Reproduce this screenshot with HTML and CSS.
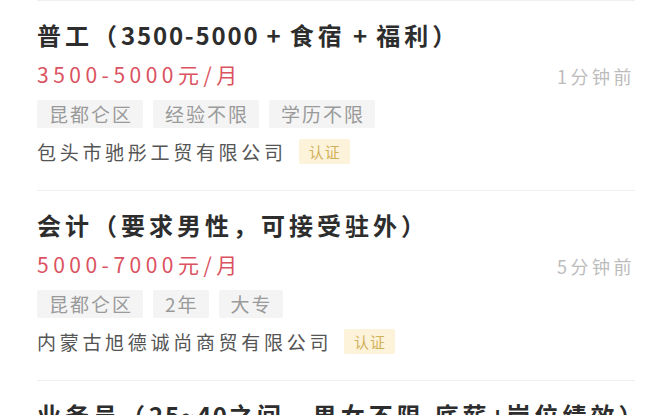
FILE: index.html
```html
<!DOCTYPE html>
<html>
<head>
    <title>招聘列表</title>
    <link rel="stylesheet" href="styles.css">
</head>
<body>
    <div class="job-list">
        <div class="job">
            <div class="title">普工（<span class="num">3500-5000 + </span>食宿<span class="num"> + </span>福利）</div>
            <div class="salary-row">
                <span class="salary">3500-5000元/月</span>
                <span class="time">1分钟前</span>
            </div>
            <div class="tags">
                <span class="tag">昆都仑区</span>
                <span class="tag">经验不限</span>
                <span class="tag">学历不限</span>
            </div>
            <div class="company">
                <span class="company-name">包头市驰彤工贸有限公司</span>
                <span class="badge">认证</span>
            </div>
        </div>

        <div class="job">
            <div class="title">会计（要求男性，可接受驻外）</div>
            <div class="salary-row">
                <span class="salary">5000-7000元/月</span>
                <span class="time">5分钟前</span>
            </div>
            <div class="tags">
                <span class="tag">昆都仑区</span>
                <span class="tag">2年</span>
                <span class="tag">大专</span>
            </div>
            <div class="company">
                <span class="company-name">内蒙古旭德诚尚商贸有限公司</span>
                <span class="badge">认证</span>
            </div>
        </div>

        <div class="job">
            <div class="title">业务员（<span class="num">25~40</span>之间，男女不限<span class="num">,</span>底薪<span class="num">+</span>岗位绩效）</div>
            <div class="salary-row">
                <span class="salary">4000-8000元/月</span>
                <span class="time">8分钟前</span>
            </div>
        </div>
    </div>
</body>
</html>
```

FILE: styles.css
```css
body {
    font-family: "Noto Sans CJK SC", "Noto Sans", sans-serif;
    background-color: #fff;
    margin: 0;
    overflow: hidden;
}

.job-list {
    margin: 0 35px 0 37px;
}

.job {
    border-top: 1px solid #f0f0f0;
    padding: 17px 0 26px;
}

.title {
    font-size: 24px;
    font-weight: bold;
    color: #2d2d2d;
    line-height: 34px;
    letter-spacing: 4px;
    white-space: nowrap;
}

.title .num {
    letter-spacing: 1.8px;
}

.salary-row {
    display: flex;
    justify-content: space-between;
    align-items: center;
    margin-top: 8px;
    height: 28px;
}

.salary {
    font-size: 21px;
    color: #db5260;
    letter-spacing: 4.5px;
}

.time {
    font-size: 18px;
    color: #bcbcbc;
    letter-spacing: 3.5px;
    margin-top: 4px;
}

.tags {
    display: flex;
    gap: 10px;
    margin-top: 12px;
}

.tag {
    background-color: #f4f4f4;
    color: #9a9a9a;
    font-size: 19px;
    letter-spacing: 2px;
    line-height: 28px;
    padding: 0 10px 0 12px;
    border-radius: 2px;
}

.company {
    display: flex;
    align-items: center;
    gap: 12px;
    margin-top: 10px;
    height: 26px;
}

.company-name {
    font-size: 19px;
    color: #555;
    letter-spacing: 3.7px;
}

.badge {
    background-color: #fdf3da;
    color: #d2b05a;
    font-size: 15px;
    letter-spacing: 1px;
    line-height: 25px;
    padding: 0 9px 0 10px;
    border-radius: 2px;
}
```
